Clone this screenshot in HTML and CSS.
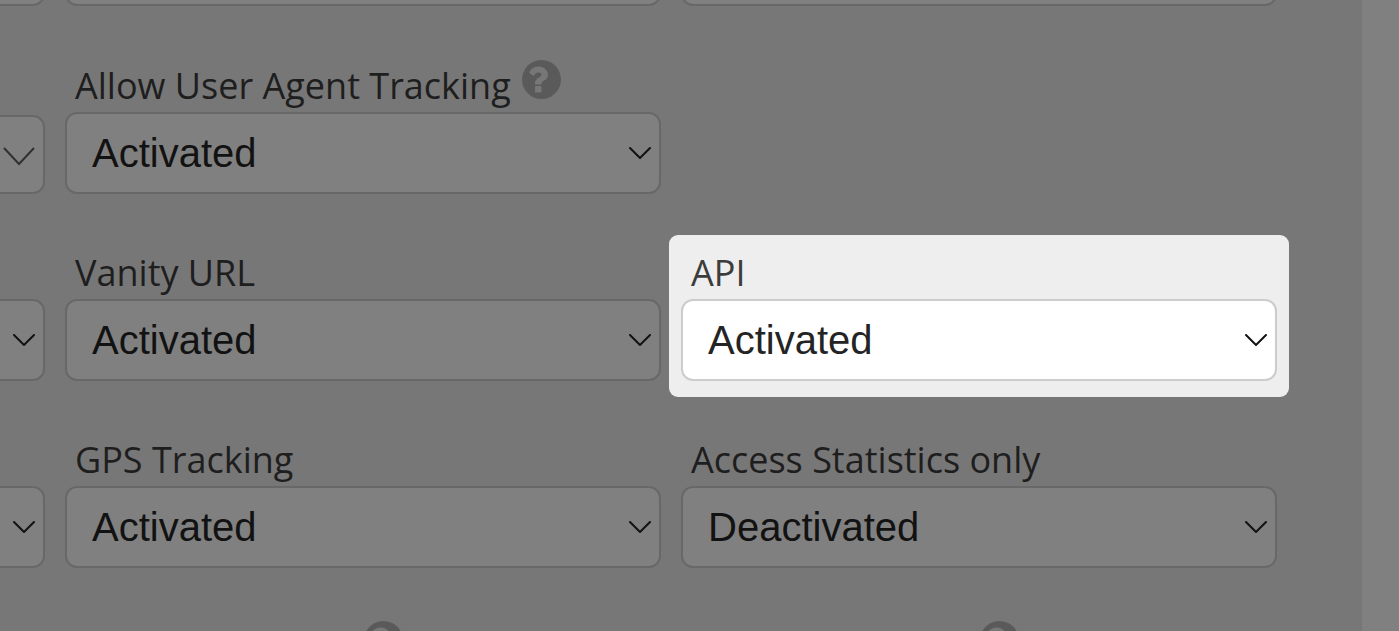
FILE: index.html
```
<!DOCTYPE html>
<html lang="en">
  <head>
    <meta charset="UTF-8" />
    <meta name="viewport" content="width=device-width, initial-scale=1.0" />
    <title>Account Settings</title>
    <link rel="stylesheet" href="styles.css" />
  </head>
  <body>
    <svg class="sprite" aria-hidden="true">
      <symbol id="help" viewBox="128 128 1536 1536">
        <path d="M896 1376v-192q0-14-9-23t-23-9h-192q-14 0-23 9t-9 23v192q0 14 9 23t23 9h192q14 0 23-9t9-23zm256-672q0-88-55.5-163t-138.5-116-170-41q-243 0-371 213-15 24 8 42l132 100q7 6 19 6 16 0 25-12 53-68 86-92 34-24 86-24 48 0 85.5 26t37.5 59q0 38-20 61t-68 45q-63 28-115.5 86.5t-52.5 125.5v36q0 14 9 23t23 9h192q14 0 23-9t9-23q0-19 21.5-49.5t54.5-49.5q32-18 49-28.5t46-35 44.5-48 28-60.5 12.5-81zm512 192q0 209-103 385.5t-279.5 279.5-385.5 103-385.5-103-279.5-279.5-103-385.5 103-385.5 279.5-279.5 385.5-103 385.5 103 279.5 279.5 103 385.5z" />
      </symbol>
    </svg>
    <main class="panel">
      <!-- bottom edge of the row above -->
      <div class="row row-cut">
        <div class="edge edge-first"></div>
        <div class="edge"></div>
        <div class="edge"></div>
      </div>

      <form class="rows">
        <div class="row">
          <select class="side side-tall" aria-label="Option"></select>
          <div class="field">
            <div class="head">
              <label for="agent">Allow User Agent Tracking</label>
              <button class="help" type="button" aria-label="Help">
                <svg><use href="#help" /></svg>
              </button>
            </div>
            <select id="agent">
              <option>Activated</option>
            </select>
          </div>
        </div>

        <div class="row">
          <select class="side" aria-label="Option"></select>
          <div class="field">
            <div class="head"><label for="vanity">Vanity URL</label></div>
            <select id="vanity">
              <option>Activated</option>
            </select>
          </div>
          <div class="field highlight">
            <div class="head"><label for="api">API</label></div>
            <select id="api">
              <option>Activated</option>
            </select>
          </div>
        </div>

        <div class="row">
          <select class="side" aria-label="Option"></select>
          <div class="field">
            <div class="head"><label for="gps">GPS Tracking</label></div>
            <select id="gps">
              <option>Activated</option>
            </select>
          </div>
          <div class="field">
            <div class="head"><label for="stats">Access Statistics only</label></div>
            <select id="stats">
              <option>Deactivated</option>
            </select>
          </div>
        </div>

        <div class="row">
          <div></div>
          <div class="head head-next">
            <button class="help" type="button" aria-label="Help">
              <svg><use href="#help" /></svg>
            </button>
          </div>
          <div class="head head-next">
            <button class="help" type="button" aria-label="Help">
              <svg><use href="#help" /></svg>
            </button>
          </div>
        </div>
      </form>
    </main>
  </body>
</html>
```

FILE: styles.css
```
* {
  box-sizing: border-box;
}
html,
body {
  margin: 0;
  padding: 0;
}
body {
  background-color: #808080;
  color: #1e1e1e;
  font-family: "Open Sans", sans-serif;
}
.sprite {
  display: none;
}
.panel {
  height: 100vh;
  overflow: hidden;
  margin-right: 37px;
  padding-right: 85px;
  background-color: #777777;
}
.rows {
  display: grid;
  row-gap: 41px;
}
.row {
  display: grid;
  grid-template-columns: 45px 1fr 1fr;
  column-gap: 20px;
  align-items: end;
}
.row-cut {
  height: 6px;
  margin-bottom: 42px;
  overflow: hidden;
  align-content: end;
}
.edge {
  height: 30px;
  border: 2px solid #686868;
  border-radius: 12px;
  background-color: #808080;
}
.edge-first {
  border-left: none;
  border-bottom-left-radius: 0;
}
.head {
  display: flex;
  align-items: flex-end;
  gap: 11px;
  height: 64px;
  padding-left: 10px;
}
.head-next {
  padding-left: 299px;
}
label {
  font-size: 36px;
  line-height: 52px;
  white-space: nowrap;
}
.help {
  width: 39px;
  height: 39px;
  margin: 0 0 13px;
  padding: 0;
  border: none;
  background: none;
}
.help svg {
  display: block;
  width: 39px;
  height: 39px;
  fill: #5a5a5a;
}
select {
  display: block;
  appearance: none;
  width: 100%;
  height: 82px;
  margin: 0;
  padding: 0 40px 0 25px;
  border: 2px solid #686868;
  border-radius: 12px;
  outline: none;
  background: #808080 url("data:image/svg+xml,%3Csvg xmlns='http://www.w3.org/2000/svg' width='22' height='12' fill='none' stroke='%23121212' stroke-width='2' stroke-linecap='round'%3E%3Cpath d='M1 1l10 10L21 1'/%3E%3C/svg%3E") no-repeat right 8px center;
  color: #121212;
  font-family: "Liberation Sans", sans-serif;
  font-size: 40px;
}
.side {
  padding: 0;
  border-left: none;
  border-radius: 0 12px 12px 0;
}
.side-tall {
  height: 79px;
  background-image: url("data:image/svg+xml,%3Csvg xmlns='http://www.w3.org/2000/svg' width='32' height='22' fill='none' stroke='%23303030' stroke-width='2'%3E%3Cpath d='M1 4l15 16L31 4'/%3E%3C/svg%3E");
}
.highlight {
  margin: 0 -12px -16px;
  padding: 0 12px 16px;
  border-radius: 9px;
  background-color: #eeeeee;
  color: #3c3c3c;
}
.highlight select {
  border-color: #cccccc;
  background-color: #ffffff;
  color: #242424;
}
```
